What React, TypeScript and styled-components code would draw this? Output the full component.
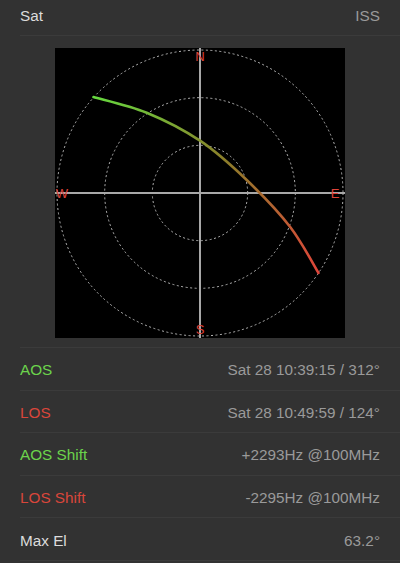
import React from "react";
import styled, { createGlobalStyle } from "styled-components";

const GlobalStyle = createGlobalStyle`
  *, *::before, *::after {
    box-sizing: border-box;
  }
  html, body {
    margin: 0;
    padding: 0;
    background: #323232;
  }
  body {
    font-family: "Liberation Sans", Arial, sans-serif;
  }
`;

type Tone = "green" | "red" | "light" | "dim";

const toneColor: Record<Tone, string> = {
  green: "#6cd44c",
  red: "#d9463b",
  light: "#dcdcdc",
  dim: "#9a9a9a",
};

const rows: { label: string; tone: Tone; value: string }[] = [
  { label: "AOS", tone: "green", value: "Sat 28 10:39:15 / 312°" },
  { label: "LOS", tone: "red", value: "Sat 28 10:49:59 / 124°" },
  { label: "AOS Shift", tone: "green", value: "+2293Hz @100MHz" },
  { label: "LOS Shift", tone: "red", value: "-2295Hz @100MHz" },
  { label: "Max El", tone: "light", value: "63.2°" },
];

// measured points of the pass on the 290px plot
const track: [number, number][] = [
  [38.5, 49],
  [91.7, 64.7],
  [145, 92.7],
  [191.7, 132],
  [235, 178.7],
  [263.5, 225],
];

function smoothPath(pts: [number, number][]) {
  let d = `M${pts[0][0]},${pts[0][1]}`;
  for (let i = 0; i < pts.length - 1; i++) {
    const p0 = pts[i - 1] || pts[i];
    const p1 = pts[i];
    const p2 = pts[i + 1];
    const p3 = pts[i + 2] || p2;
    const c1x = p1[0] + (p2[0] - p0[0]) / 6;
    const c1y = p1[1] + (p2[1] - p0[1]) / 6;
    const c2x = p2[0] - (p3[0] - p1[0]) / 6;
    const c2y = p2[1] - (p3[1] - p1[1]) / 6;
    d += ` C${c1x},${c1y} ${c2x},${c2y} ${p2[0]},${p2[1]}`;
  }
  return d;
}

const Polar = () => {
  const c = 145;
  const r = 143;
  return (
    <svg width="290" height="290" viewBox="0 0 290 290">
      <rect width="290" height="290" fill="#000" />
      {[r / 3, (2 * r) / 3, r].map((rad) => (
        <circle
          key={rad}
          cx={c}
          cy={c}
          r={rad}
          fill="none"
          stroke="#b4b4b4"
          strokeWidth="1"
          strokeDasharray="2 2.5"
        />
      ))}
      <line x1="0" y1={c} x2="290" y2={c} stroke="#a8a8a8" strokeWidth="2" />
      <line x1={c} y1="0" x2={c} y2="290" stroke="#a8a8a8" strokeWidth="2" />
      <defs>
        <linearGradient id="pass" gradientUnits="userSpaceOnUse" x1="38" y1="49" x2="264" y2="225">
          <stop offset="0" stopColor="#66d83f" />
          <stop offset="0.5" stopColor="#8c7e2a" />
          <stop offset="1" stopColor="#e0453a" />
        </linearGradient>
      </defs>
      <path d={smoothPath(track)} fill="none" stroke="url(#pass)" strokeWidth="2.6" strokeLinecap="round" />
      <g fill="#e0443a" fontFamily="Liberation Sans, Arial, sans-serif" fontSize="13" textAnchor="middle" dominantBaseline="central">
        <text x={c} y="8">N</text>
        <text x={c} y="281">S</text>
        <text x="7" y={c}>W</text>
        <text x="280" y={c}>E</text>
      </g>
    </svg>
  );
};

export default function App() {
  return (
    <Page>
      <GlobalStyle />
      <Header>
        <Label tone="light">Sat</Label>
        <Value>ISS</Value>
      </Header>
      <ChartArea>
        <Polar />
      </ChartArea>
      {rows.map((row) => (
        <Row key={row.label}>
          <Label tone={row.tone}>{row.label}</Label>
          <Value>{row.value}</Value>
        </Row>
      ))}
    </Page>
  );
}

const Page = styled.div`
  width: 400px;
  height: 563px;
  background: #323232;
  overflow: hidden;
`;

const Line = styled.div`
  display: flex;
  align-items: center;
  justify-content: space-between;
  margin-left: 20px;
  padding-right: 20px;
  border-bottom: 1px solid #3b3b3b;
  font-size: 15.3px;
`;

const Header = styled(Line)`
  height: 36px;
  padding-bottom: 3px;
`;

const Row = styled(Line)`
  height: 42.6px;
  padding-top: 3px;
`;

const ChartArea = styled.div`
  display: flex;
  justify-content: center;
  height: 312px;
  padding-top: 12px;
  margin-left: 20px;
  border-bottom: 1px solid #3b3b3b;
  & > svg {
    flex: none;
    margin-left: -20px;
  }
`;

const Label = styled.span<{ tone: Tone }>`
  color: ${(p) => toneColor[p.tone]};
`;

const Value = styled.span`
  color: #9a9a9a;
`;
